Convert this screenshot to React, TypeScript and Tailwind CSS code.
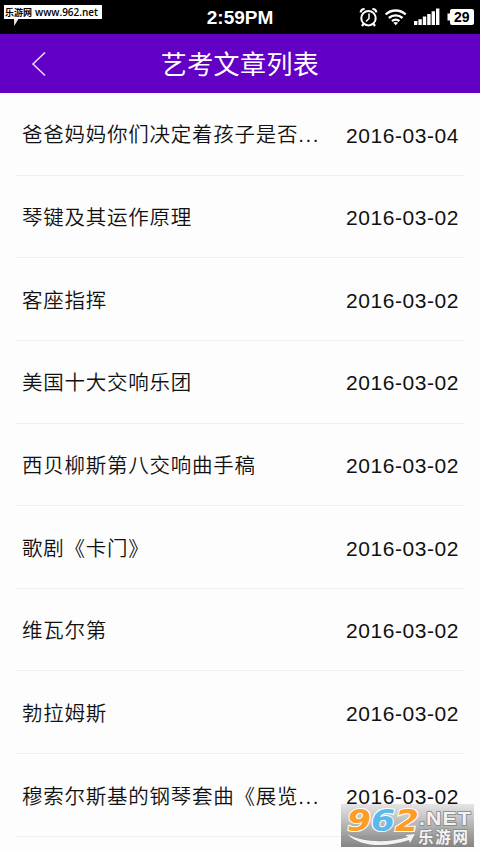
const articles = [
  { title: '爸爸妈妈你们决定着孩子是否', more: true, date: '2016-03-04' },
  { title: '琴键及其运作原理', date: '2016-03-02' },
  { title: '客座指挥', date: '2016-03-02' },
  { title: '美国十大交响乐团', date: '2016-03-02' },
  { title: '西贝柳斯第八交响曲手稿', date: '2016-03-02' },
  { title: '歌剧《卡门》', date: '2016-03-02' },
  { title: '维瓦尔第', date: '2016-03-02' },
  { title: '勃拉姆斯', date: '2016-03-02' },
  { title: '穆索尔斯基的钢琴套曲《展览', more: true, date: '2016-03-02' },
];

export default function App() {
  return (
    <div className="relative flex h-[853px] w-[480px] flex-col overflow-hidden bg-[#fdfdfd] font-['Liberation_Sans','Noto_Sans_CJK_SC',sans-serif]">
      <StatusBar />
      <header className="grid h-[59px] shrink-0 grid-cols-[80px_1fr_80px] items-center bg-[#6200c6] text-white">
        <svg className="ml-[30px] h-[26px] w-[18px]" viewBox="0 0 18 26" fill="none" stroke="#f3dcff" strokeWidth="1.5">
          <path d="M15 1.5 3 13l12 11.5" />
        </svg>
        <h1 className="pt-[3px] text-center text-[26px] leading-[56px] tracking-[0.4px] whitespace-nowrap">艺考文章列表</h1>
      </header>

      <ul className="px-[15px]">
        {articles.map((article) => (
          <ArticleRow key={article.title} {...article} />
        ))}
      </ul>

      <SiteTag />
      <Watermark />
    </div>
  );
}

function ArticleRow({ title, more, date }: { title: string; more?: boolean; date: string }) {
  return (
    <li className="flex h-[82.65px] items-center justify-between border-b border-[#f0f0f0] pr-[6px] pl-[7px] text-[#111]">
      <span className="pt-[4px] text-[20.5px] font-[350] tracking-[0.75px] whitespace-nowrap">
        {title}
        {more && <span className="tracking-[1.6px]">...</span>}
      </span>
      <span className="pt-[3px] text-[21px] tracking-[0.55px] whitespace-nowrap">{date}</span>
    </li>
  );
}

function StatusBar() {
  return (
    <div className="relative h-[34px] shrink-0 bg-black text-white">
      <div className="flex h-full items-center justify-center pt-[2px] text-[19px] font-bold">2:59PM</div>
      <svg className="absolute top-0 left-[350px] h-[34px] w-[130px]" viewBox="350 0 130 34" fill="none" stroke="white">
        <circle cx="368.5" cy="18.2" r="7.2" strokeWidth="2" />
        <path d="M369 13.5v5l-3 3" strokeWidth="1.5" />
        <path d="M360.6 12.4a4 4 0 0 1 4-3.4M376.4 12.4a4 4 0 0 0-4-3.4M363.5 24l-1.5 2M373.5 24l1.5 2" strokeWidth="2.2" />
        <path d="M385.7 14.5a14.5 14.5 0 0 1 20 0M388.9 18a10 10 0 0 1 13.6 0M392 21.2a5.5 5.5 0 0 1 7.4 0" strokeWidth="2.4" />
        <path d="M395.7 25.3l-2.4-2.5a4 4 0 0 1 4.8 0z" fill="white" stroke="none" />
        <path d="M414 21h3.4v4H414zM418.4 19.3h3.4V25h-3.4zM422.8 16.5h3.4V25h-3.4zM427.2 14h3.4v11h-3.4zM431.6 11.2h3.4V25h-3.4zM436 8.5h3.4V25H436z" fill="white" stroke="none" />
        <path d="M452 9h20a2 2 0 0 1 2 2v12a2 2 0 0 1-2 2h-20a2 2 0 0 1-2-2v-2.5h-2.5v-7h2.5V11a2 2 0 0 1 2-2z" fill="white" stroke="none" />
        <text x="461.8" y="22" textAnchor="middle" fontSize="14" fontWeight="700" fill="black" stroke="none">29</text>
      </svg>
    </div>
  );
}

function SiteTag() {
  return (
    <>
      <svg className="absolute top-[18px] left-[12px] h-[9px] w-[9px]" viewBox="0 0 9 9">
        <path d="M2 0h5L2.2 8z" fill="#eee" />
      </svg>
      <svg className="absolute top-[5px] left-[4px] h-[14px] w-[98px] bg-white" viewBox="0 0 98 14" fontWeight="700">
        <text x="1" y="11" fontSize="9" textLength="27" fontFamily="'Noto Sans CJK SC', sans-serif">乐游网</text>
        <text x="31" y="11" fontSize="10" textLength="63" lengthAdjust="spacingAndGlyphs" fontWeight="600" fontFamily="'Open Sans', sans-serif">www.962.net</text>
      </svg>
    </>
  );
}

function Watermark() {
  return (
    <svg className="absolute top-[800px] left-[341px] h-[48px] w-[134px]" viewBox="341 800 134 48" fontWeight="700">
      <defs>
        <linearGradient id="plate" x1="0" y1="0" x2="0" y2="1">
          <stop offset="0" stopColor="#777" stopOpacity="0.18" />
          <stop offset="0.5" stopColor="#777" stopOpacity="0.55" />
          <stop offset="1" stopColor="#777" stopOpacity="0.9" />
        </linearGradient>
      </defs>
      <path d="M341 804h133v43H341z" fill="url(#plate)" />
      <g fontSize="30" fontStyle="italic" stroke="white" strokeWidth="2" paintOrder="stroke" fontFamily="'DejaVu Sans', sans-serif">
        <text x="347" y="830.5" fill="#ff9c25" textLength="24" lengthAdjust="spacingAndGlyphs">9</text>
        <text x="371" y="830.5" fill="#58b9ed" textLength="24" lengthAdjust="spacingAndGlyphs">6</text>
        <text x="395" y="830.5" fill="#ff9c25" textLength="24" lengthAdjust="spacingAndGlyphs">2</text>
      </g>
      <g fill="#f3f3f3" stroke="#858585" strokeWidth="1.4" paintOrder="stroke">
        <path d="M347 834c17 9 42 9 61 3l-3-2 10-1-5 9-1-3c-24 8-49 7-62-6z" strokeWidth="0.7" />
        <text x="419" y="824.5" fontSize="18" letterSpacing="1" textLength="53" lengthAdjust="spacingAndGlyphs" fontFamily="'Liberation Sans', sans-serif">.NET</text>
        <text x="418" y="842.5" fontSize="15.5" textLength="50" fontFamily="'Noto Sans CJK SC', sans-serif">乐游网</text>
      </g>
    </svg>
  );
}
